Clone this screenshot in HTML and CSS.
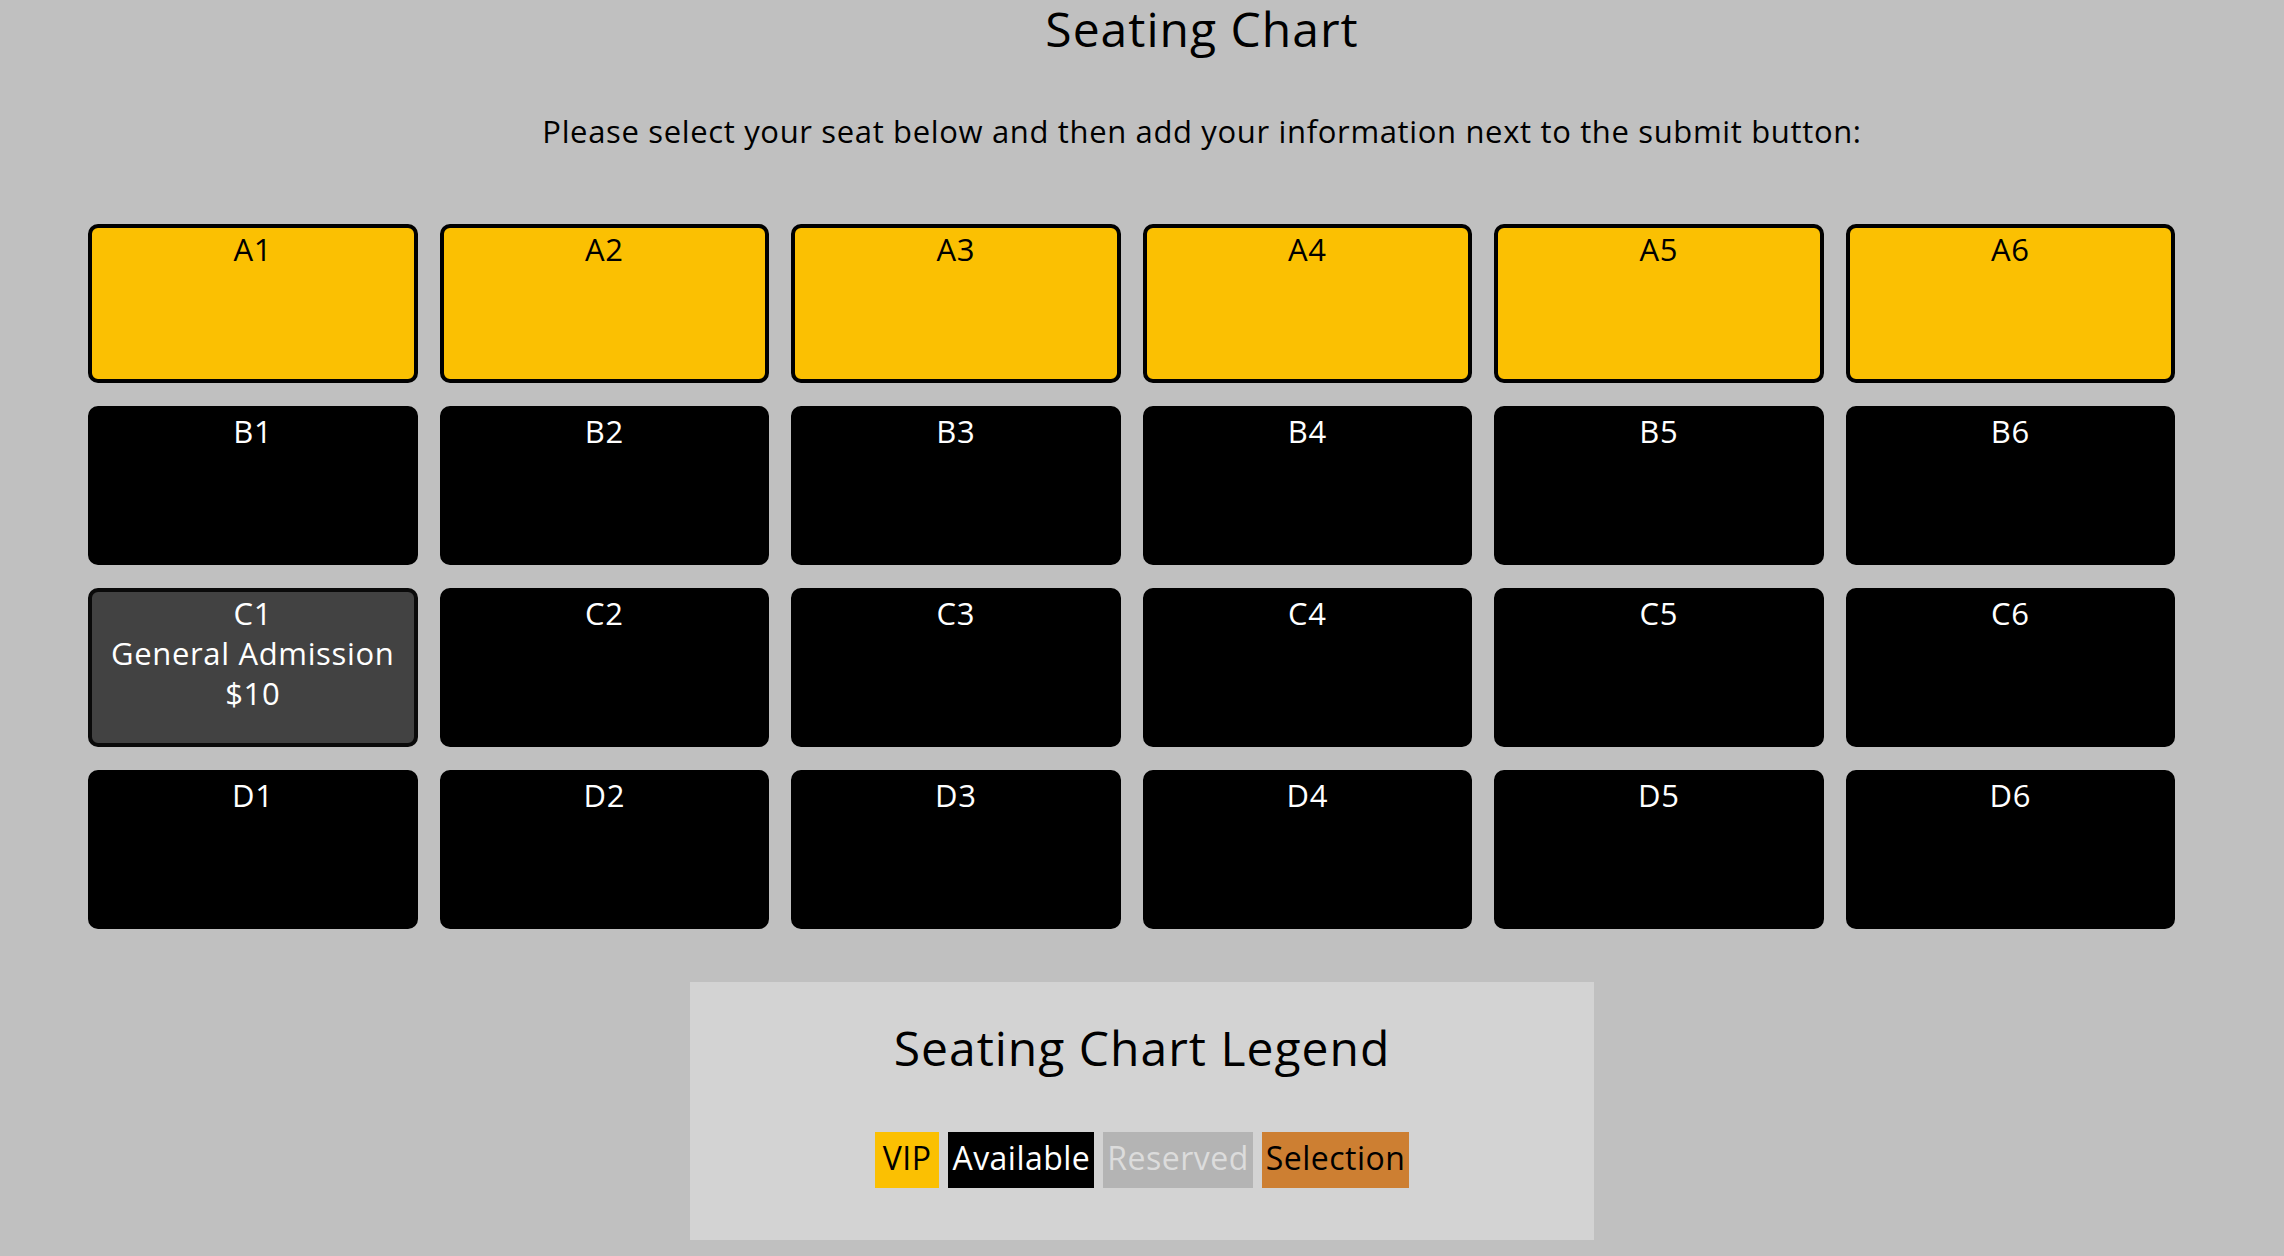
FILE: index.html
```html
<!DOCTYPE html>
<html lang="en">
<head>
<meta charset="utf-8">
<title>Seating Chart</title>
<link rel="stylesheet" href="styles.css">
</head>
<body>
  <header class="page-header">
    <h1 class="page-title">Seating Chart</h1>
    <p class="intro">Please select your seat below and then add your information next to the submit button:</p>
  </header>

  <main class="chart-wrap">
    <div class="seat-grid">
      <div class="seat seat-vip">A1</div>
      <div class="seat seat-vip">A2</div>
      <div class="seat seat-vip">A3</div>
      <div class="seat seat-vip">A4</div>
      <div class="seat seat-vip">A5</div>
      <div class="seat seat-vip">A6</div>

      <div class="seat">B1</div>
      <div class="seat">B2</div>
      <div class="seat">B3</div>
      <div class="seat">B4</div>
      <div class="seat">B5</div>
      <div class="seat">B6</div>

      <div class="seat seat-hover">C1<br>General Admission<br>$10</div>
      <div class="seat">C2</div>
      <div class="seat">C3</div>
      <div class="seat">C4</div>
      <div class="seat">C5</div>
      <div class="seat">C6</div>

      <div class="seat">D1</div>
      <div class="seat">D2</div>
      <div class="seat">D3</div>
      <div class="seat">D4</div>
      <div class="seat">D5</div>
      <div class="seat">D6</div>
    </div>
  </main>

  <section class="legend">
    <h2 class="legend-title">Seating Chart Legend</h2>
    <div class="legend-items">
      <span class="key key-vip">VIP</span>
      <span class="key key-available">Available</span>
      <span class="key key-reserved">Reserved</span>
      <span class="key key-selection">Selection</span>
    </div>
  </section>
</body>
</html>
```

FILE: styles.css
```css
html, body {
  margin: 0;
  padding: 0;
}

body {
  background: #c0c0c0;
  color: #000;
  font-family: "Open Sans", "Noto Sans", "Liberation Sans", sans-serif;
  font-weight: 400;
  letter-spacing: 0.021em;
}

.page-header {
  padding: 1px 0 0 120px;
  text-align: center;
}

.page-title {
  margin: 0;
  font-size: 48px;
  line-height: 56px;
  font-weight: 400;
  letter-spacing: 0.021em;
}

.intro {
  margin: 54px 0 0;
  font-size: 31px;
  line-height: 40px;
  letter-spacing: 0.021em;
}

.chart-wrap {
  padding: 73px 109px 0 88px;
}

.seat-grid {
  display: grid;
  grid-template-columns: repeat(6, 1fr);
  column-gap: 22px;
  row-gap: 23px;
}

.seat {
  box-sizing: border-box;
  height: 159px;
  padding-top: 1px;
  border: 4px solid #000;
  border-radius: 10px;
  background: #000;
  color: #fff;
  text-align: center;
  font-size: 31px;
  line-height: 40px;
  letter-spacing: 0.021em;
}

.seat-vip {
  background: #fbc002;
  color: #000;
}

.seat-hover {
  background: #424242;
  border-color: #0a0a0a;
}

.legend {
  box-sizing: border-box;
  width: 904px;
  margin: 53px auto 0;
  padding: 38px 0 52px;
  background: #d3d3d3;
  text-align: center;
}

.legend-title {
  margin: 0;
  font-size: 48px;
  line-height: 56px;
  font-weight: 400;
  letter-spacing: 0.021em;
}

.legend-items {
  margin-top: 56px;
  display: flex;
  justify-content: center;
  gap: 9px;
}

.key {
  padding: 4px 4px 8px;
  font-size: 32px;
  line-height: 44px;
  letter-spacing: 0.015em;
}

.key-vip {
  padding-left: 8px;
  padding-right: 8px;
  background: #fbc002;
  color: #000;
}

.key-available {
  background: #000;
  color: #fff;
}

.key-reserved {
  background: #b4b4b4;
  color: #dcdcdc;
}

.key-selection {
  background: #cd7f32;
  color: #000;
}
```
